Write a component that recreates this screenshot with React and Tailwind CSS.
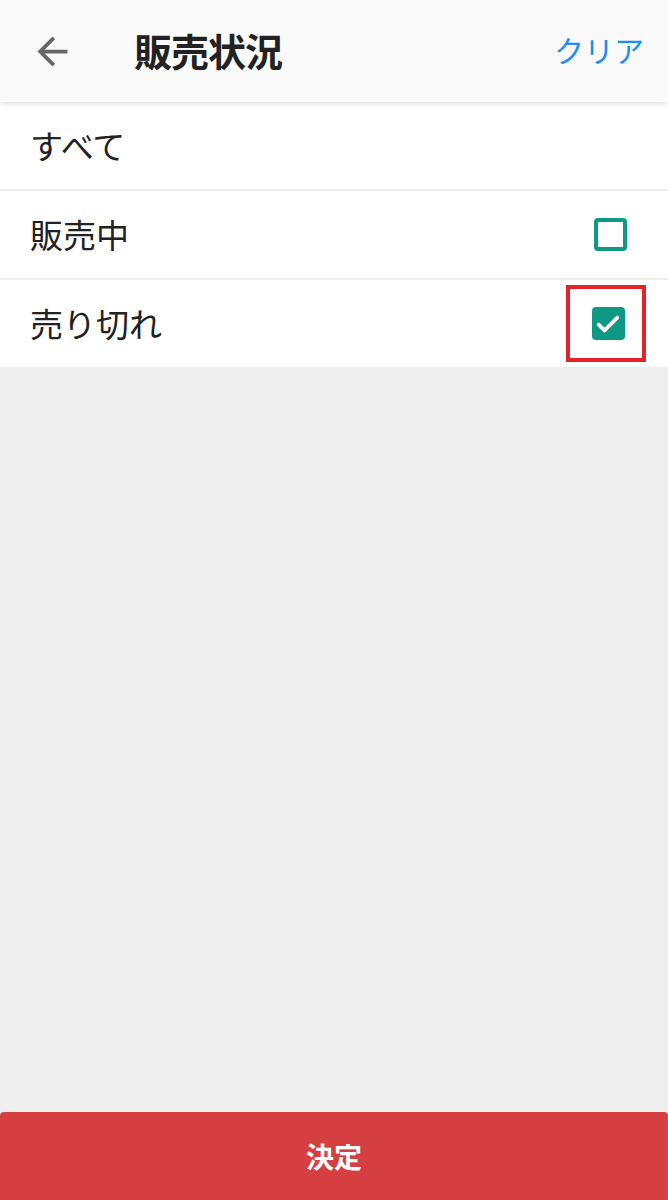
import { useState } from "react";

const font = {
  fontFamily: '"Noto Sans CJK JP", "Noto Sans", sans-serif',
};

function BackArrow({ className }) {
  return (
    <svg className={className} viewBox="0 0 24 24" fill="currentColor">
      <path d="M20 11H7.83l5.59-5.59L12 4l-8 8 8 8 1.41-1.41L7.83 13H20v-2z" />
    </svg>
  );
}

function Checkbox({ checked }) {
  if (checked) {
    return (
      <div className="w-[33px] h-[33px] rounded-[4px] bg-[#0e9984] flex items-center justify-center">
        <svg className="w-[28px] h-[28px]" viewBox="0 0 24 24" fill="none" stroke="white" strokeWidth="3.2" strokeLinecap="round" strokeLinejoin="round">
          <path d="M4 12.5l5 5L20 6.5" />
        </svg>
      </div>
    );
  }
  return <div className="w-[33px] h-[33px] rounded-[4px] border-[4px] border-[#0e9984] bg-white" />;
}

const items = [
  { label: "すべて", box: false },
  { label: "販売中", box: true, checked: false },
  { label: "売り切れ", box: true, checked: true, marked: true },
];

export default function App() {
  const [rows] = useState(items);
  return (
    <div className="w-[668px] h-[1200px] bg-[#eeeeee] flex flex-col overflow-hidden" style={font}>
      <header className="h-[102px] bg-[#fafafa] flex items-center shadow-[0_2px_6px_rgba(0,0,0,0.12)] relative z-10 shrink-0">
        <button className="w-[104px] h-full flex items-center justify-center text-[#666666]">
          <BackArrow className="w-[45px] h-[45px]" />
        </button>
        <h1 className="flex-1 text-[38px] font-bold text-[#222222] tracking-[-1px] pl-[30px] -mt-[3px]">販売状況</h1>
        <button className="pr-[24px] text-[30px] text-[#1e90f4] -mt-[4px]">クリア</button>
      </header>

      <ul className="bg-white shrink-0">
        {rows.map((r, i) => (
          <li
            key={r.label}
            className={
              "flex items-center justify-between pl-[30px] pr-[43px] " +
              (i < rows.length - 1 ? "h-[89px] border-b-2 border-[#eeeeee]" : "h-[87px]")
            }
          >
            <span className="text-[33px] text-[#222222] mt-[1px]">{r.label}</span>
            {r.box &&
              (r.marked ? (
                <div className="-mr-[21px] w-[80px] h-[77px] border-[4px] border-[#e8202a] flex items-center justify-center pl-[4px]">
                  <Checkbox checked={r.checked} />
                </div>
              ) : (
                <div className="-mr-[2px]">
                  <Checkbox checked={r.checked} />
                </div>
              ))}
          </li>
        ))}
      </ul>

      <div className="flex-1" />

      <button className="h-[88px] shrink-0 bg-[#d63f42] rounded-t-[4px] text-white text-[28px] font-bold flex items-center justify-center">
        決定
      </button>
    </div>
  );
}
